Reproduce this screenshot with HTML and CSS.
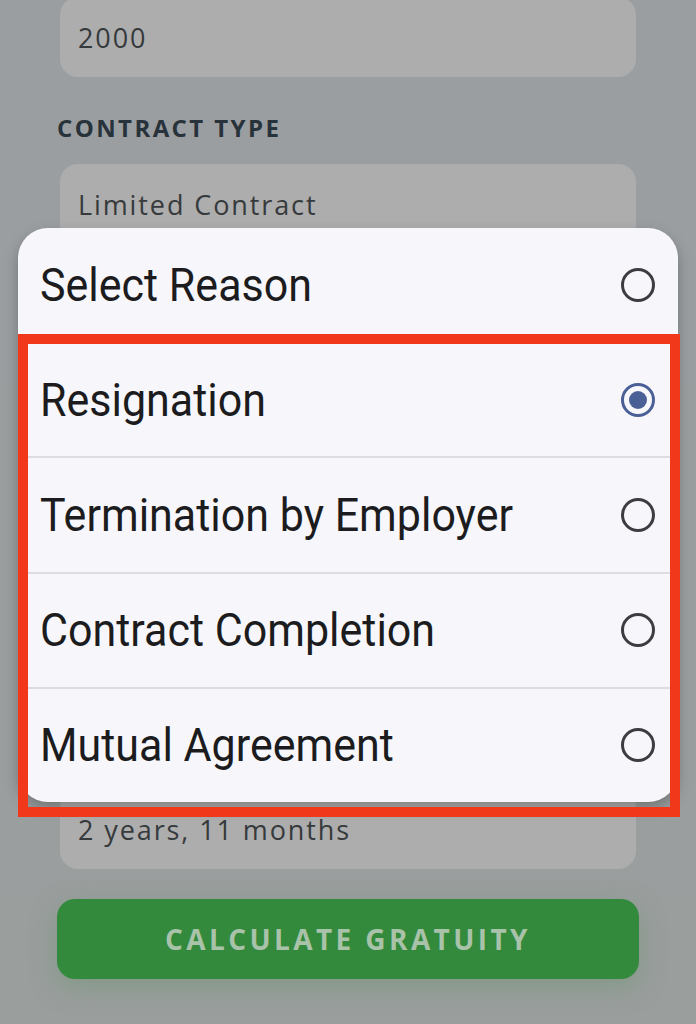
FILE: index.html
```html
<!DOCTYPE html>
<html>
<head>
<meta charset="utf-8">
<link rel="stylesheet" href="styles.css">
</head>
<body>
<div class="screen">
  <form class="form">
    <div class="field">
      <div class="input">2000</div>
    </div>
    <div class="field">
      <div class="label">CONTRACT TYPE</div>
      <div class="input">Limited Contract</div>
    </div>
    <div class="field">
      <div class="label"></div>
      <div class="input"></div>
    </div>
    <div class="field">
      <div class="label"></div>
      <div class="input"></div>
      <div class="spacer"></div>
    </div>
    <div class="field">
      <div class="input">2 years, 11 months</div>
    </div>
    <div class="button">CALCULATE GRATUITY</div>
  </form>

  <div class="dialog">
    <div class="option">
      <span class="text">Select Reason</span>
      <span class="radio"></span>
    </div>
    <div class="option">
      <span class="text">Resignation</span>
      <span class="radio checked"></span>
    </div>
    <div class="option">
      <span class="text">Termination by Employer</span>
      <span class="radio"></span>
    </div>
    <div class="option">
      <span class="text">Contract Completion</span>
      <span class="radio"></span>
    </div>
    <div class="option">
      <span class="text">Mutual Agreement</span>
      <span class="radio"></span>
    </div>
  </div>

  <div class="highlight"></div>
</div>
</body>
</html>
```

FILE: styles.css
```css
html, body {
  margin: 0;
  padding: 0;
}

body {
  width: 696px;
  height: 1024px;
  overflow: hidden;
  background: #9a9ea0;
}

.screen {
  position: relative;
  width: 696px;
  height: 1024px;
  overflow: hidden;
  background: linear-gradient(#9a9ea1, #9a9e9d);
}

.form {
  display: flex;
  flex-direction: column;
  margin: -3px 57px 0 57px;
}

.field {
  display: flex;
  flex-direction: column;
}

.label {
  height: 74px;
  padding-top: 13px;
  display: flex;
  align-items: center;
  font-family: "Open Sans", "Liberation Sans", sans-serif;
  font-weight: 700;
  font-size: 24px;
  letter-spacing: 2.4px;
  color: #28323a;
}

.input {
  height: 80px;
  margin: 0 3px;
  padding-left: 18px;
  border-radius: 18px;
  background: #adadad;
  display: flex;
  align-items: center;
  font-family: "Open Sans", "Liberation Sans", sans-serif;
  font-size: 27px;
  letter-spacing: 1.9px;
  color: #363a3c;
}

.spacer {
  height: 211px;
}

.button {
  margin-top: 30px;
  height: 80px;
  border-radius: 18px;
  background: #338a3c;
  box-shadow: 0 8px 24px rgba(110, 150, 115, 0.55);
  display: flex;
  align-items: center;
  justify-content: center;
  font-family: "Open Sans", "Liberation Sans", sans-serif;
  font-weight: 700;
  font-size: 28px;
  letter-spacing: 3.4px;
  color: #a9c2aa;
}

.dialog {
  position: absolute;
  left: 18px;
  top: 228px;
  width: 660px;
  height: 574px;
  border-radius: 30px;
  background: #f7f7fb;
  box-shadow: 0 6px 14px rgba(0, 0, 0, 0.25);
  overflow: hidden;
  display: flex;
  flex-direction: column;
}

.option {
  flex: 1;
  display: flex;
  align-items: center;
  justify-content: space-between;
  padding: 0 23px 0 22px;
  border-top: 2px solid #dcdce1;
}

.option:first-child {
  border-top: none;
}

.text {
  font-family: Roboto, "Noto Sans", sans-serif;
  font-size: 43px;
  color: #1c1c1e;
  transform: scaleY(1.06);
}

.radio {
  width: 28px;
  height: 28px;
  border: 3.5px solid #3d3d3f;
  border-radius: 50%;
  position: relative;
}

.radio.checked {
  border-color: #4b5f97;
}

.radio.checked::after {
  content: "";
  position: absolute;
  left: 5px;
  top: 5px;
  width: 18px;
  height: 18px;
  border-radius: 50%;
  background: #4b5f97;
}

.highlight {
  position: absolute;
  left: 18px;
  top: 334px;
  width: 642px;
  height: 463px;
  border: 10px solid #f2381b;
}
```
